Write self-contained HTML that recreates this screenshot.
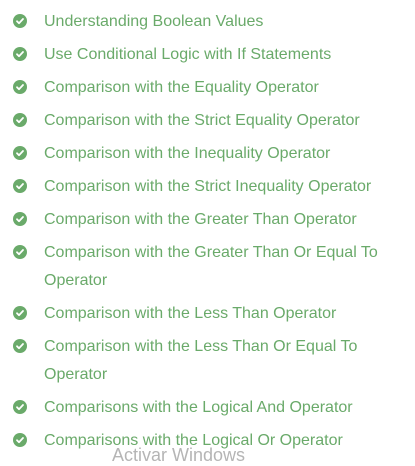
<!DOCTYPE html>
<html><head><meta charset="utf-8"><style>
html,body{margin:0;padding:0;background:#fff;width:415px;height:460px;overflow:hidden;}
ul{list-style:none;margin:0;padding:0;position:absolute;top:8px;left:0;}
li{position:relative;padding-left:44px;line-height:28px;margin-bottom:5px;font-family:"Liberation Sans",sans-serif;font-size:16px;letter-spacing:0;color:#6aaa6a;white-space:nowrap;}
li svg{position:absolute;left:13px;top:6px;}
.w{position:absolute;left:112px;top:445px;font-family:"Liberation Sans",sans-serif;font-size:18px;color:#b5b5b5;}
</style></head><body>
<ul>
<li><svg width="14" height="14" viewBox="0 0 14 14"><circle cx="7" cy="7" r="7" fill="#6aaa6a"/><path d="M4 7.2l2 2 4-4.2" stroke="#fff" stroke-width="1.8" fill="none" stroke-linecap="round" stroke-linejoin="round"/></svg>Understanding Boolean Values</li>
<li><svg width="14" height="14" viewBox="0 0 14 14"><circle cx="7" cy="7" r="7" fill="#6aaa6a"/><path d="M4 7.2l2 2 4-4.2" stroke="#fff" stroke-width="1.8" fill="none" stroke-linecap="round" stroke-linejoin="round"/></svg>Use Conditional Logic with If Statements</li>
<li><svg width="14" height="14" viewBox="0 0 14 14"><circle cx="7" cy="7" r="7" fill="#6aaa6a"/><path d="M4 7.2l2 2 4-4.2" stroke="#fff" stroke-width="1.8" fill="none" stroke-linecap="round" stroke-linejoin="round"/></svg>Comparison with the Equality Operator</li>
<li><svg width="14" height="14" viewBox="0 0 14 14"><circle cx="7" cy="7" r="7" fill="#6aaa6a"/><path d="M4 7.2l2 2 4-4.2" stroke="#fff" stroke-width="1.8" fill="none" stroke-linecap="round" stroke-linejoin="round"/></svg>Comparison with the Strict Equality Operator</li>
<li><svg width="14" height="14" viewBox="0 0 14 14"><circle cx="7" cy="7" r="7" fill="#6aaa6a"/><path d="M4 7.2l2 2 4-4.2" stroke="#fff" stroke-width="1.8" fill="none" stroke-linecap="round" stroke-linejoin="round"/></svg>Comparison with the Inequality Operator</li>
<li><svg width="14" height="14" viewBox="0 0 14 14"><circle cx="7" cy="7" r="7" fill="#6aaa6a"/><path d="M4 7.2l2 2 4-4.2" stroke="#fff" stroke-width="1.8" fill="none" stroke-linecap="round" stroke-linejoin="round"/></svg>Comparison with the Strict Inequality Operator</li>
<li><svg width="14" height="14" viewBox="0 0 14 14"><circle cx="7" cy="7" r="7" fill="#6aaa6a"/><path d="M4 7.2l2 2 4-4.2" stroke="#fff" stroke-width="1.8" fill="none" stroke-linecap="round" stroke-linejoin="round"/></svg>Comparison with the Greater Than Operator</li>
<li><svg width="14" height="14" viewBox="0 0 14 14"><circle cx="7" cy="7" r="7" fill="#6aaa6a"/><path d="M4 7.2l2 2 4-4.2" stroke="#fff" stroke-width="1.8" fill="none" stroke-linecap="round" stroke-linejoin="round"/></svg>Comparison with the Greater Than Or Equal To<br>Operator</li>
<li><svg width="14" height="14" viewBox="0 0 14 14"><circle cx="7" cy="7" r="7" fill="#6aaa6a"/><path d="M4 7.2l2 2 4-4.2" stroke="#fff" stroke-width="1.8" fill="none" stroke-linecap="round" stroke-linejoin="round"/></svg>Comparison with the Less Than Operator</li>
<li><svg width="14" height="14" viewBox="0 0 14 14"><circle cx="7" cy="7" r="7" fill="#6aaa6a"/><path d="M4 7.2l2 2 4-4.2" stroke="#fff" stroke-width="1.8" fill="none" stroke-linecap="round" stroke-linejoin="round"/></svg>Comparison with the Less Than Or Equal To<br>Operator</li>
<li><svg width="14" height="14" viewBox="0 0 14 14"><circle cx="7" cy="7" r="7" fill="#6aaa6a"/><path d="M4 7.2l2 2 4-4.2" stroke="#fff" stroke-width="1.8" fill="none" stroke-linecap="round" stroke-linejoin="round"/></svg>Comparisons with the Logical And Operator</li>
<li><svg width="14" height="14" viewBox="0 0 14 14"><circle cx="7" cy="7" r="7" fill="#6aaa6a"/><path d="M4 7.2l2 2 4-4.2" stroke="#fff" stroke-width="1.8" fill="none" stroke-linecap="round" stroke-linejoin="round"/></svg>Comparisons with the Logical Or Operator</li>
</ul>
<div class="w">Activar Windows</div>
</body></html>
